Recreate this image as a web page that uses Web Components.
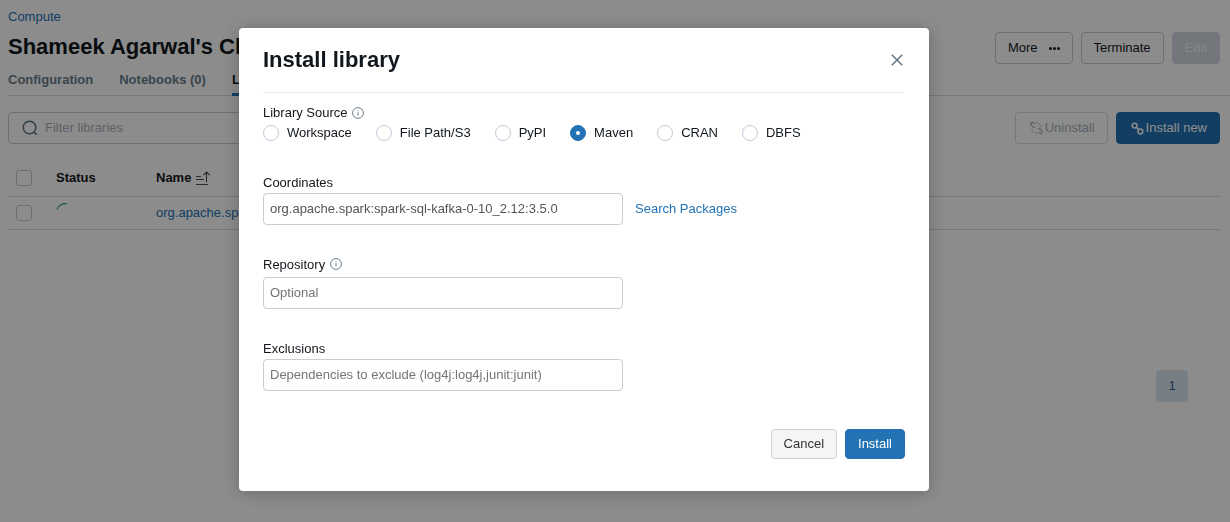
<!DOCTYPE html>
<html><head><meta charset="utf-8"><title>Install library</title>
<style>
html,body{margin:0;padding:0;height:100%;overflow:hidden;background:#fff;font:13px/20px "Liberation Sans",Arial,sans-serif;color:#11171c}
</style></head><body>
<db-page></db-page>
<db-overlay>
<db-modal heading="Install library">
  <db-source></db-source>
  <db-field label="Coordinates" top="32" lh="20" value="org.apache.spark:spark-sql-kafka-0-10_2.12:3.5.0" link="Search Packages"></db-field>
  <db-field label="Repository" info top="28" lh="24" placeholder="Optional"></db-field>
  <db-field label="Exclusions" top="30" lh="20" placeholder="Dependencies to exclude (log4j:log4j,junit:junit)"></db-field>
</db-modal>
</db-overlay>
<script>
const FONT='font-family:"Liberation Sans",Arial,sans-serif;';
function def(name,html,init){
  customElements.define(name,class extends HTMLElement{
    connectedCallback(){
      if(this.shadowRoot)return;
      const r=this.attachShadow({mode:'open'});
      r.innerHTML=typeof html==='function'?html(this):html;
      if(init)init(this,r);
    }
  });
}
const INFO=`<svg width="12" height="12" viewBox="0 0 12 12" fill="none" style="display:block"><circle cx="6" cy="6" r="5.4" stroke="#5f7281" stroke-width=".9"/><path d="M6 5.2v3.2M6 3.4v.9" stroke="#5f7281" stroke-width=".9"/></svg>`;
const CHAIN=c=>`<svg width="13" height="13" viewBox="0 0 13 13" fill="none" style="display:block"><circle cx="3.6" cy="3.6" r="2.4" stroke="${c}" stroke-width="1.5"/><circle cx="9.4" cy="9.4" r="2.4" stroke="${c}" stroke-width="1.5"/><path d="M5.3 5.3l2.4 2.4" stroke="${c}" stroke-width="1.5"/></svg>`;
const BROKEN=c=>`<svg width="13" height="14" viewBox="0 0 13 14" fill="none" style="display:block"><path d="M5 3.2L3.7 1.9a1.7 1.7 0 0 0-2.4 2.4L2.8 5.8a1.7 1.7 0 0 0 2 .3M8 10.8l1.3 1.3a1.7 1.7 0 0 0 2.4-2.4L10.2 8.2a1.7 1.7 0 0 0-2-.3" stroke="${c}" stroke-width="1.2"/><path d="M7 1v2M10 2.5L8.8 4M12 5h-2M1 9h2M2.5 11.5L4 10.2M6 13v-2" stroke="${c}" stroke-width=".9"/></svg>`;

def('db-btn',el=>`<style>
:host{display:inline-flex;box-sizing:border-box;height:var(--h,32px);align-items:center;justify-content:center;gap:var(--g,0);padding:0 var(--pr,12px) 0 var(--pl,12px);border:1px solid #c0cdd8;border-radius:4px;background:transparent;color:#11171c;font-size:13px;${FONT}white-space:nowrap;flex:none}
:host([kind=primary]){background:#2272b4;border-color:#2272b4;color:#fff}
:host([kind=disabled]){background:#d1d9e1;border-color:#d1d9e1;color:#f0f3f5}
:host([kind=ghost]){color:#a5b0b9;border-color:#d5dde3}
:host([kind=cancel]){background:#f5f5f5;border-color:#d2d2d2;color:#333}
</style><slot></slot>`);

def('db-tab',el=>`<style>
:host{display:block;font-weight:700;font-size:13px;line-height:20px;padding-top:1px;color:#6b7d8b;box-sizing:border-box;height:27px;flex:none;white-space:nowrap;border-bottom:3px solid transparent}
:host([active]){color:#11171c;border-bottom-color:#2272b4;width:40px}
</style><slot></slot>`);

def('db-check',`<style>:host{display:block;box-sizing:border-box;width:16px;height:16px;border:1px solid #c0cdd8;border-radius:3px;background:transparent;flex:none}</style>`);

def('db-page',`<style>
:host{display:block;height:522px;box-sizing:border-box;padding:8px 10px 0 8px;${FONT}font-size:13px;color:#11171c;background:#fff}
a{color:#2272b4;text-decoration:none}
.crumb{line-height:18px;height:18px}
.head{display:flex;justify-content:space-between;align-items:flex-start;height:37px;margin-top:6px}
h1{margin:-1px 0 0;font-size:22px;line-height:32px;font-weight:700;white-space:nowrap}
.acts{display:flex;gap:8px}
.dots{display:inline-flex;gap:1px;margin-left:11px}
.dots i{display:block;width:3px;height:3px;border-radius:50%;background:#11171c}
.tabs{display:flex;gap:26px;margin-right:-10px;border-bottom:1px solid #d5dce1;height:26px}
.tools{display:flex;justify-content:space-between;margin-top:16px}
.filter{box-sizing:border-box;width:600px;height:32px;border:1px solid #c0cdd8;border-radius:4px;display:flex;align-items:center;gap:7px;padding-left:13px;color:#a8b3bd}
.toolbtns{display:flex;gap:8px;--pl:14px;--pr:12px}
.row{display:grid;grid-template-columns:40px 100px 1fr;align-items:center;border-bottom:1px solid #d5dce1;padding-left:8px}
.row.h{height:36px;margin-top:16px;font-weight:700}
.row.b{align-items:start;padding-top:8px;box-sizing:border-box;height:33px}
.name{display:flex;align-items:center;gap:4px}
.pager{display:flex;justify-content:flex-end;margin-top:140px;padding-right:32px}
.pg{width:32px;height:32px;border-radius:4px;background:#d9e7f3;color:#2a5a84;display:flex;align-items:center;justify-content:center}
.spin{display:block;margin-top:-2px}
.lnk{line-height:16px}
</style>
<div class="crumb"><a href="#">Compute</a></div>
<div class="head"><h1>Shameek Agarwal's Cl</h1>
<div class="acts"><db-btn>More<span class="dots"><i></i><i></i><i></i></span></db-btn><db-btn>Terminate</db-btn><db-btn kind="disabled">Edit</db-btn></div></div>
<div class="tabs"><db-tab>Configuration</db-tab><db-tab>Notebooks (0)</db-tab><db-tab active>L</db-tab></div>
<div class="tools"><div class="filter"><svg width="16" height="16" viewBox="0 0 16 16" fill="none" style="flex:none"><circle cx="7.5" cy="7.5" r="6.3" stroke="#5f7281" stroke-width="1.5"/><path d="M12.2 12.2l2.6 2.6" stroke="#5f7281" stroke-width="1.5"/></svg><span>Filter libraries</span></div>
<div class="toolbtns"><db-btn kind="ghost" style="--g:2px">${BROKEN('#a5b0b9')}Uninstall</db-btn><db-btn kind="primary" style="--g:2px">${CHAIN('#fff')}Install new</db-btn></div></div>
<div class="row h"><db-check></db-check><span>Status</span><span class="name">Name <svg width="16" height="15" viewBox="0 0 16 15" fill="none" stroke="#445461"><path d="M1 5.5h5M1 8.5h8M1 13.5h12M11.5 11V1M8.5 4l3-3 3 3" stroke-width="1.1"/></svg></span></div>
<div class="row b"><db-check></db-check><svg class="spin" width="14" height="14" viewBox="0 0 14 14" fill="none"><path d="M1 6.5A8 8 0 0 1 11 1" stroke="#2f9e63" stroke-width="1.2"/></svg><a class="lnk" href="#">org.apache.sp</a></div>
<div class="pager"><div class="pg">1</div></div>`);

def('db-overlay',`<style>
:host{position:fixed;inset:0;display:flex;justify-content:flex-start;align-items:flex-start;padding:28px 0 0 239px;box-sizing:border-box;background:rgba(0,0,0,.45)}
</style><slot></slot>`);

def('db-modal',el=>`<style>
:host{display:flex;flex-direction:column;box-sizing:border-box;width:690px;height:463px;background:#fff;border-radius:4px;padding:0 24px 32px 24px;box-shadow:0 2px 18px rgba(0,0,0,.25);color:#11171c;${FONT}font-size:13px}
header{height:65px;display:flex;align-items:center;justify-content:space-between;border-bottom:1px solid #e8ecef;margin-right:1px;box-sizing:border-box;flex:none}
h2{margin:0;font-size:22px;line-height:28px;font-weight:700}
.x{display:block;margin-right:1px}
.body{flex:1;min-height:0}
footer{display:flex;justify-content:flex-end;gap:8px;flex:none}
footer db-btn{--h:30px}
</style><header><h2>${el.getAttribute('heading')}</h2>
<svg class="x" width="12" height="12" viewBox="0 0 12 12" fill="none"><path d="M.8.8l10.4 10.4M11.2.8L.8 11.2" stroke="#5f7281" stroke-width="1.4"/></svg></header>
<div class="body"><slot></slot></div>
<footer><db-btn kind="cancel">Cancel</db-btn><db-btn kind="primary">Install</db-btn></footer>`);

def('db-radio',el=>`<style>
:host{display:inline-flex;align-items:center;gap:8px;line-height:16px;white-space:nowrap;color:#11171c;font-size:13px}
i{display:flex;align-items:center;justify-content:center;box-sizing:border-box;width:16px;height:16px;border:1px solid #c3ccd9;border-radius:50%;background:#fff}
:host([checked]) i{background:#2272b4;border-color:#2272b4}
:host([checked]) i::after{content:"";width:4px;height:4px;background:#fff;border-radius:50%}
</style><i></i><slot></slot>`);

def('db-source',`<style>
:host{display:block;padding-top:10px}
.l{display:flex;align-items:center;gap:4px;line-height:20px;height:20px}
.opts{display:flex;gap:24px;margin-top:2px;height:16px}
</style><div class="l">Library Source ${INFO}</div>
<div class="opts"><db-radio>Workspace</db-radio><db-radio>File Path/S3</db-radio><db-radio>PyPI</db-radio><db-radio checked>Maven</db-radio><db-radio>CRAN</db-radio><db-radio>DBFS</db-radio></div>`);

def('db-field',el=>{
 const v=el.getAttribute('value'),p=el.getAttribute('placeholder'),lk=el.getAttribute('link');
 return `<style>
:host{display:block;padding-top:${el.getAttribute('top')}px}
.l{display:flex;align-items:center;gap:5px;height:${el.getAttribute('lh')}px;line-height:18px}
.l svg{position:relative;top:-1px}
.r{display:flex;align-items:center;gap:12px}
.i{box-sizing:border-box;width:360px;height:32px;border:1px solid #cdcdcd;border-radius:4px;padding:0 6px;display:flex;align-items:center;color:#555;background:#fff;white-space:nowrap;overflow:hidden}
.i.p{color:#757575}
a{color:#2272b4;text-decoration:none}
</style><div class="l">${el.getAttribute('label')}${el.hasAttribute('info')?INFO:''}</div>
<div class="r"><div class="i${v?'':' p'}">${v||p}</div>${lk?`<a href="#">${lk}</a>`:''}</div>`;
});
</script>
</body></html>
